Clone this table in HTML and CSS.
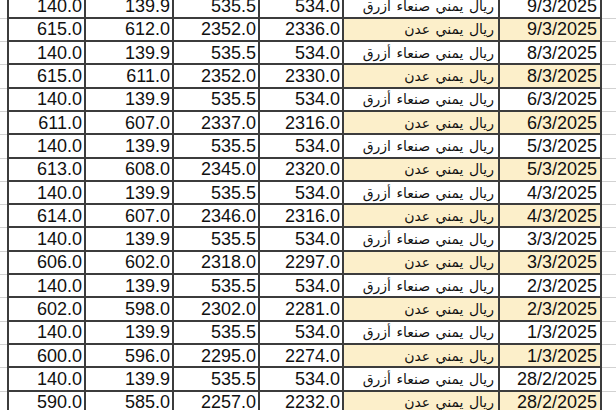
FILE: index.html
```html
<!DOCTYPE html>
<html lang="ar">
<head>
<meta charset="utf-8">
<link rel="stylesheet" href="styles.css">
</head>
<body>
<div class="page">
<div class="edge-col"><div></div><div></div><div></div><div></div><div></div><div></div><div></div><div></div><div></div><div></div><div></div><div></div><div></div><div></div><div></div><div></div><div></div><div></div></div>
<div class="sheet">
<div class="row"><div class="cell num">140.0</div><div class="cell num">139.9</div><div class="cell num">535.5</div><div class="cell num">534.0</div><div class="cell ar">ريال يمني صنعاء ازرق</div><div class="cell date">9/3/2025</div></div>
<div class="row aden"><div class="cell num">615.0</div><div class="cell num">612.0</div><div class="cell num">2352.0</div><div class="cell num">2336.0</div><div class="cell ar">ريال يمني عدن</div><div class="cell date">9/3/2025</div></div>
<div class="row"><div class="cell num">140.0</div><div class="cell num">139.9</div><div class="cell num">535.5</div><div class="cell num">534.0</div><div class="cell ar">ريال يمني صنعاء أزرق</div><div class="cell date">8/3/2025</div></div>
<div class="row aden"><div class="cell num">615.0</div><div class="cell num">611.0</div><div class="cell num">2352.0</div><div class="cell num">2330.0</div><div class="cell ar">ريال يمني عدن</div><div class="cell date">8/3/2025</div></div>
<div class="row"><div class="cell num">140.0</div><div class="cell num">139.9</div><div class="cell num">535.5</div><div class="cell num">534.0</div><div class="cell ar">ريال يمني صنعاء أزرق</div><div class="cell date">6/3/2025</div></div>
<div class="row aden"><div class="cell num">611.0</div><div class="cell num">607.0</div><div class="cell num">2337.0</div><div class="cell num">2316.0</div><div class="cell ar">ريال يمني عدن</div><div class="cell date">6/3/2025</div></div>
<div class="row"><div class="cell num">140.0</div><div class="cell num">139.9</div><div class="cell num">535.5</div><div class="cell num">534.0</div><div class="cell ar">ريال يمني صنعاء ازرق</div><div class="cell date">5/3/2025</div></div>
<div class="row aden"><div class="cell num">613.0</div><div class="cell num">608.0</div><div class="cell num">2345.0</div><div class="cell num">2320.0</div><div class="cell ar">ريال يمني عدن</div><div class="cell date">5/3/2025</div></div>
<div class="row"><div class="cell num">140.0</div><div class="cell num">139.9</div><div class="cell num">535.5</div><div class="cell num">534.0</div><div class="cell ar">ريال يمني صنعاء أزرق</div><div class="cell date">4/3/2025</div></div>
<div class="row aden"><div class="cell num">614.0</div><div class="cell num">607.0</div><div class="cell num">2346.0</div><div class="cell num">2316.0</div><div class="cell ar">ريال يمني عدن</div><div class="cell date">4/3/2025</div></div>
<div class="row"><div class="cell num">140.0</div><div class="cell num">139.9</div><div class="cell num">535.5</div><div class="cell num">534.0</div><div class="cell ar">ريال يمني صنعاء أزرق</div><div class="cell date">3/3/2025</div></div>
<div class="row aden"><div class="cell num">606.0</div><div class="cell num">602.0</div><div class="cell num">2318.0</div><div class="cell num">2297.0</div><div class="cell ar">ريال يمني عدن</div><div class="cell date">3/3/2025</div></div>
<div class="row"><div class="cell num">140.0</div><div class="cell num">139.9</div><div class="cell num">535.5</div><div class="cell num">534.0</div><div class="cell ar">ريال يمني صنعاء أزرق</div><div class="cell date">2/3/2025</div></div>
<div class="row aden"><div class="cell num">602.0</div><div class="cell num">598.0</div><div class="cell num">2302.0</div><div class="cell num">2281.0</div><div class="cell ar">ريال يمني عدن</div><div class="cell date">2/3/2025</div></div>
<div class="row"><div class="cell num">140.0</div><div class="cell num">139.9</div><div class="cell num">535.5</div><div class="cell num">534.0</div><div class="cell ar">ريال يمني صنعاء أزرق</div><div class="cell date">1/3/2025</div></div>
<div class="row aden"><div class="cell num">600.0</div><div class="cell num">596.0</div><div class="cell num">2295.0</div><div class="cell num">2274.0</div><div class="cell ar">ريال يمني عدن</div><div class="cell date">1/3/2025</div></div>
<div class="row"><div class="cell num">140.0</div><div class="cell num">139.9</div><div class="cell num">535.5</div><div class="cell num">534.0</div><div class="cell ar">ريال يمني صنعاء أزرق</div><div class="cell date">28/2/2025</div></div>
<div class="row aden"><div class="cell num">590.0</div><div class="cell num">585.0</div><div class="cell num">2257.0</div><div class="cell num">2232.0</div><div class="cell ar">ريال يمني عدن</div><div class="cell date">28/2/2025</div></div>
</div>
<div class="edge-col right"><div></div><div></div><div></div><div></div><div></div><div></div><div></div><div></div><div></div><div></div><div></div><div></div><div></div><div></div><div></div><div></div><div></div><div></div></div>
</div>
</body>
</html>
```
FILE: styles.css
```css
html, body {
  margin: 0;
  padding: 0;
  background: #ffffff;
  overflow: hidden;
}
body {
  width: 616px;
  height: 410px;
}
.page {
  display: flex;
  align-items: flex-start;
  margin-top: -4.5px;
}
.edge-col {
  width: 7px;
  flex: none;
  display: flex;
  flex-direction: column;
}
.edge-col.right {
  width: 14px;
}
.edge-col > div {
  box-sizing: border-box;
  height: 23.3px;
  border-bottom: 1px solid #d2d2d2;
}
.sheet {
  flex: none;
  display: grid;
  grid-template-columns: 75px 86px 84px 82px 154px 100px;
  grid-auto-rows: 21.3px;
  gap: 2px;
  padding: 0 2px 2px 2px;
  background: #3c3c3c;
  font-family: "Liberation Sans", Arial, sans-serif;
  font-size: 18px;
  color: #111111;
}
.row {
  display: contents;
}
.cell {
  display: flex;
  align-items: center;
  justify-content: flex-end;
  padding-right: 2px;
  background: #ffffff;
  white-space: nowrap;
  overflow: hidden;
  line-height: 20px;
}
.cell.ar {
  font-family: "DejaVu Sans", sans-serif;
  font-size: 14px;
  word-spacing: 1px;
  direction: rtl;
  justify-content: flex-start;
  padding-right: 4px;
}
.cell.date {
  padding-right: 3px;
}
.aden .ar,
.aden .date {
  background: #fcefca;
}
```
